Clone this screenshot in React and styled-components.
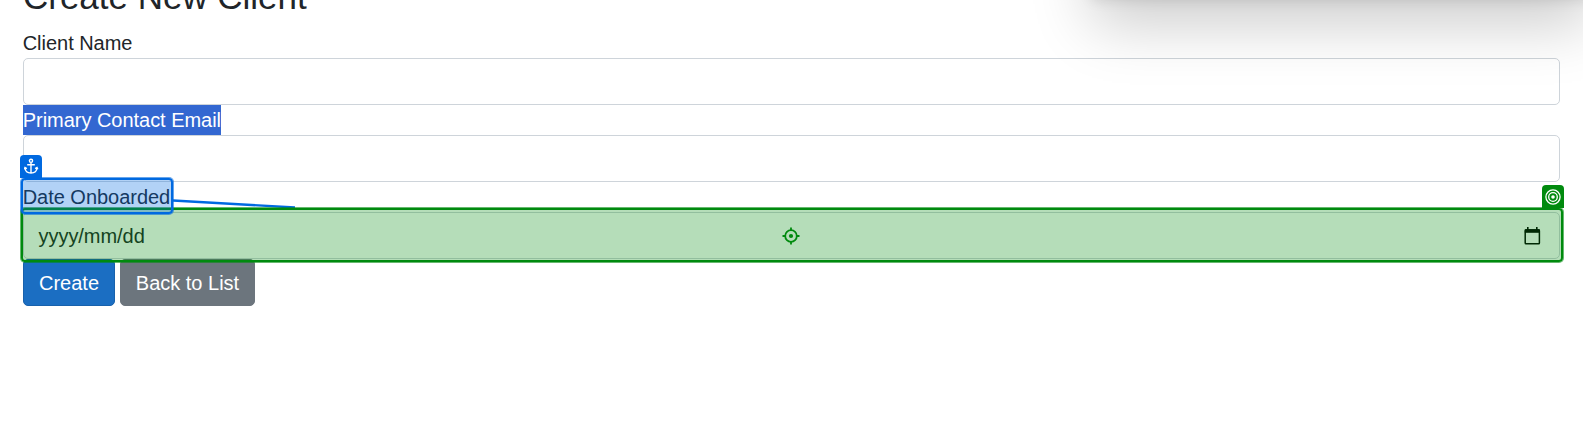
import React from "react";
import styled, { createGlobalStyle } from "styled-components";

const GlobalStyle = createGlobalStyle`
  *, *::before, *::after { box-sizing: border-box; }
  body {
    margin: 0;
    background: #fff;
    color: #212529;
    font: 400 20px/30px "Liberation Sans", Arial, sans-serif;
  }
`;

const Page = styled.main`
  position: relative;
  height: 421px;
  overflow: hidden;
  padding: 0 23px;
`;

const Heading = styled.h2`
  height: 44px;
  margin: -25px 0 9px;
  font-size: 35px;
  font-weight: 400;
  line-height: 44px;
  letter-spacing: -0.02px;
`;

const Form = styled.form`
  display: flex;
  flex-direction: column;
`;

const Group = styled.div`
  display: flex;
  flex-direction: column;
  align-items: flex-start;
`;

const Label = styled.label`
  position: relative;
  height: 30px;
  white-space: nowrap;
  letter-spacing: -0.03px;
  text-indent: -0.3px;
  ${(p) => p.$selected && "background: #3367d1; color: #fff;"}
`;

const Field = styled.div`
  position: relative;
  display: flex;
  align-items: center;
  justify-content: space-between;
  width: 100%;
  height: 47px;
  padding: 0 18px 0 15px;
  border: 1px solid #ced4da;
  border-radius: 5px;
`;

const Placeholder = styled.span`
  letter-spacing: -0.04px;
  text-indent: -0.5px;
`;

const Actions = styled.div`
  display: flex;
  gap: 5px;
`;

const Button = styled.button`
  width: ${(p) => p.$width}px;
  height: 47px;
  padding: 0;
  border: 1px solid ${(p) => p.$edge};
  border-radius: 5px;
  background: ${(p) => p.$fill};
  color: #fff;
  font: inherit;
`;

const Highlight = styled.div`
  position: absolute;
  z-index: ${(p) => p.$layer};
  inset: ${(p) => p.$inset};
  border: 2px solid ${(p) => p.$color};
  border-radius: 4px;
  background: ${(p) => p.$tint};
  box-shadow: 0 0 0 1px ${(p) => p.$halo};
`;

const Badge = styled.div`
  position: absolute;
  z-index: 4;
  top: ${(p) => p.$top}px;
  ${(p) => p.$side}: ${(p) => p.$offset}px;
  display: flex;
  align-items: center;
  justify-content: center;
  width: 22px;
  height: 23px;
  border-radius: 4px 4px 0 0;
  background: ${(p) => p.$color};
`;

const Connector = styled.svg`
  position: absolute;
  z-index: 1;
  left: 150px;
  top: 16px;
`;

const Crosshair = styled.svg`
  position: absolute;
  z-index: 4;
  left: 758px;
  top: 13.5px;
`;

const FloatingPanel = styled.aside`
  position: absolute;
  z-index: 5;
  top: -308px;
  left: 1092px;
  width: 500px;
  height: 300px;
  background: #fff;
  box-shadow: 0 32px 58px rgba(0, 0, 0, 0.2), 0 6px 14px rgba(0, 0, 0, 0.14);
`;

function AnchorIcon() {
  return (
    <svg width="15" height="17" viewBox="0 0 15 17" fill="none" stroke="#fff" strokeWidth="1.4">
      <circle cx="7" cy="2.8" r="1.6" />
      <path d="M7 4.4v10.8M3.2 6.7h7.6M1 9.8c.2 3.6 2.8 5.3 6 5.3s5.8-1.7 6-5.3M.2 11.3l.8-1.7 1.9 1.1M13.8 11.3l-.8-1.7-1.9 1.1" />
    </svg>
  );
}

function TargetIcon() {
  return (
    <svg width="16" height="16" viewBox="0 0 16 16" fill="none" stroke="#fff" strokeWidth="1.3">
      <circle cx="8" cy="8" r="7.1" />
      <circle cx="8" cy="8" r="4.3" />
      <circle cx="8" cy="8" r="1.8" fill="#fff" stroke="none" />
    </svg>
  );
}

function CalendarIcon() {
  return (
    <svg width="17" height="18" viewBox="0 0 17 18" fill="none" stroke="#000">
      <rect x="1.2" y="3" width="14.2" height="13.8" rx="0.8" strokeWidth="1.5" />
      <path d="M.8 4h15" strokeWidth="3.6" />
      <path d="M3.8 0v3M12.8 0v3" strokeWidth="1.6" />
    </svg>
  );
}

export default function App() {
  return (
    <>
      <GlobalStyle />
      <Page>
        <Heading>Create New Client</Heading>
        <Form>
          <Group>
            <Label>Client Name</Label>
            <Field />
          </Group>
          <Group>
            <Label $selected>Primary Contact Email</Label>
            <Field />
          </Group>
          <Group>
            <Label>
              Date Onboarded
              <Highlight $layer={3} $inset="-4px -3px -2px -2px" $color="#0069e0" $tint="rgba(0,105,224,.3)" $halo="rgba(0,105,224,.6)" />
              <Badge $top={-27} $side="left" $offset={-3} $color="#0069e0">
                <AnchorIcon />
              </Badge>
              <Connector width="124" height="12" fill="none">
                <path d="M0 2.5 122 9.5" stroke="#0069e0" strokeWidth="2.4" />
              </Connector>
            </Label>
            <Field>
              <Placeholder>yyyy/mm/dd</Placeholder>
              <CalendarIcon />
              <Highlight $layer={2} $inset="-5px -4px -4px -3px" $color="#008a0e" $tint="rgba(0,138,14,.29)" $halo="rgba(0,138,14,.6)" />
              <Badge $top={-28} $side="right" $offset={-4.5} $color="#008a0e">
                <TargetIcon />
              </Badge>
              <Crosshair width="18" height="18" viewBox="0 0 18 18" fill="none" stroke="#008a0e" strokeWidth="1.8">
                <circle cx="9" cy="9" r="5.8" />
                <circle cx="9" cy="9" r="2.1" fill="#008a0e" stroke="none" />
                <path d="M9 .5V4M9 14v3.5M.5 9H4M14 9h3.5" />
              </Crosshair>
            </Field>
          </Group>
          <Actions>
            <Button type="button" $width={92} $fill="#1b6ec2" $edge="#1861ac">Create</Button>
            <Button type="button" $width={135} $fill="#6c757d" $edge="#6c757d">Back to List</Button>
          </Actions>
        </Form>
        <FloatingPanel />
      </Page>
    </>
  );
}
